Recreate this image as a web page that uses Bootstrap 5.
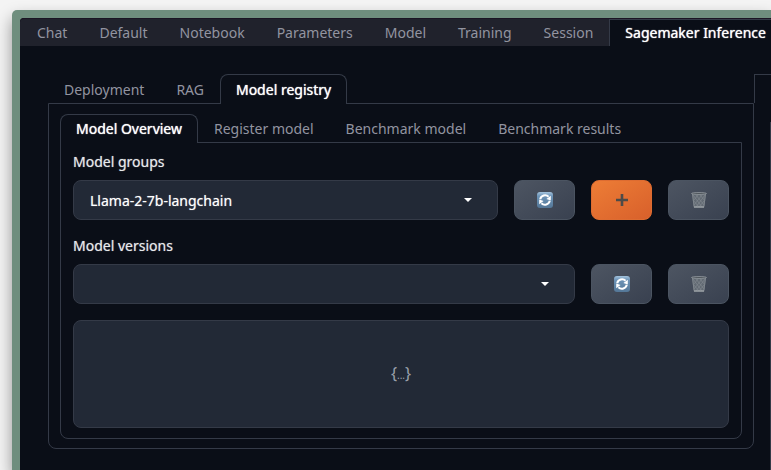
<!DOCTYPE html>
<html lang="en">
<head>
<meta charset="utf-8">
<meta name="viewport" content="width=device-width, initial-scale=1">
<title>Sagemaker Inference</title>
<link rel="stylesheet" href="https://cdn.jsdelivr.net/npm/bootstrap@5.3.0/dist/css/bootstrap.min.css">
<style>
:root { --line: #343a47; --ink: #0a0e17; --field: #222936; }
body { font: 14px/20px "Noto Sans", sans-serif; color: #e8e9ec; background: #f4f4f4; }
.desk { padding: 10px 0 0 12px; }
.frame { background: #6f8e7e; border-top-left-radius: 5px; padding: 8px 0 0 8px; box-shadow: 0 8px 16px rgba(0,0,0,.4); }
.app { background: var(--ink); border-top-left-radius: 4px; }
.tabset { border: 0; }
.tabset .nav-link { color: #9294a0; padding: 5px 15px 4px; border: 1px solid transparent; border-bottom: 0; border-radius: 8px 8px 0 0; margin: 0; line-height: 20px; white-space: nowrap; }
.tabset .nav-link.active { color: #fff; background: var(--ink); border-color: var(--line); text-shadow: 0 0 1px #fff; }
.outer-tabs, .inner-tabs { position: relative; z-index: 1; margin-bottom: -1px; }
.tabset.inner-tabs .nav-link { padding-top: 4px; }
.top-tabs { background: #20222c; border-top: 1px solid #1b1524; border-top-left-radius: 4px; padding-left: 1px; }
.tabset.top-tabs .nav-link { padding: 3px 15px; border-radius: 0; }
.workspace { padding: 28px 0 0 28px; }
.main-column { padding-bottom: 21px; }
.panel { border: 1px solid var(--line); border-radius: 0 0 8px 8px; }
.outer-panel { padding: 10px 11px 9px; }
.inner-panel { padding: 9px 12px 10px; }
.side { width: 17px; }
.side-tab { height: 29px; border: 1px solid var(--line); border-width: 1px 0 0 1px; }
.side-body { border-right: 1px solid var(--line); margin-top: 19px; }
.fields { display: flex; flex-direction: column; gap: 16px; }
.form-label { margin-bottom: 8px; text-shadow: 0 0 1px rgba(232,233,236,.6); }
.pick { height: 40px; font-size: 14px; color: #fff; text-shadow: 0 0 1px rgba(255,255,255,.6); background-color: var(--field); border: 1px solid var(--line); border-radius: 8px; padding: 8px 40px 8px 16px;
  background-image: url("data:image/svg+xml,%3Csvg xmlns='http://www.w3.org/2000/svg' viewBox='0 0 10 6'%3E%3Cpath fill='%23fff' d='M1 1h8L5 5z'/%3E%3C/svg%3E"); background-size: 10px 6px; background-position: right 24px center; }
.tool { width: 61px; height: 40px; padding: 0; border: 1px solid #4b5461; border-radius: 8px; background: linear-gradient(to bottom right, #4d5562, #394150); }
.tool.add { background: linear-gradient(to bottom right, #ed7d36, #d8602b); border-color: #dd6c31; }
.tool svg { display: block; margin: auto; }
.viewer { height: 108px; background: var(--field); border: 1px solid var(--line); border-radius: 8px; color: #9ba1ac; font-size: 16px; }
.viewer small { font-size: 10px; }
</style>
<script src="https://cdn.jsdelivr.net/npm/bootstrap@5.3.0/dist/js/bootstrap.bundle.min.js"></script>
</head>
<body class="overflow-hidden">
<svg class="position-absolute" width="0" height="0" aria-hidden="true">
  <linearGradient id="blue" x1="0" y1="0" x2="0" y2="1"><stop stop-color="#a3c3dd"/><stop offset=".25" stop-color="#6d94b7"/><stop offset="1" stop-color="#547797"/></linearGradient>
  <symbol id="sync" viewBox="0 0 18 18">
    <rect x="1" y="1" width="16" height="16" rx="3" fill="url(#blue)"/>
    <path d="M4.2 8.2a5 5 0 0 1 8.4-2.4M13.8 9.8a5 5 0 0 1-8.4 2.4" fill="none" stroke="#fff" stroke-width="2"/>
    <path d="M14.8 4.8v4.7l-4.4-1.6zM3.2 13.2V8.5l4.4 1.6z" fill="#fff"/>
  </symbol>
  <symbol id="bin" viewBox="0 0 18 18">
    <path d="M2 2.5h14L14.2 16.5H3.8z" fill="#626a73"/>
    <path d="M3 4l9 12M6 4l8 10M10 4l5 6M3 9l6 7M15 4L6 16M12 4L4 14M8 4l-4 5M14 10l-5 6" stroke="#858b92" stroke-width=".6" fill="none"/>
    <path d="M2.5 3l1.6 12.5M15.5 3l-1.6 12.5" stroke="#7f868d" fill="none"/>
    <path d="M4 16h10" stroke="#a0a5aa" stroke-width="1.4"/>
    <ellipse cx="9" cy="2.5" rx="7.5" ry="1" fill="#50575d" stroke="#91979d" stroke-width=".8"/>
  </symbol>
</svg>
<div class="desk">
 <div class="frame">
  <main class="app">
   <nav class="nav nav-tabs tabset top-tabs flex-nowrap" aria-label="Main">
    <button type="button" class="nav-link">Chat</button>
    <button type="button" class="nav-link">Default</button>
    <button type="button" class="nav-link">Notebook</button>
    <button type="button" class="nav-link">Parameters</button>
    <button type="button" class="nav-link">Model</button>
    <button type="button" class="nav-link">Training</button>
    <button type="button" class="nav-link">Session</button>
    <button type="button" class="nav-link active flex-grow-1 text-start">Sagemaker Inference</button>
   </nav>
   <div class="workspace d-flex">
    <section class="main-column flex-grow-1">
     <nav class="nav nav-tabs tabset outer-tabs" aria-label="Sagemaker">
      <button type="button" class="nav-link">Deployment</button>
      <button type="button" class="nav-link">RAG</button>
      <button type="button" class="nav-link active">Model registry</button>
     </nav>
     <div class="panel outer-panel">
      <nav class="nav nav-tabs tabset inner-tabs" aria-label="Model registry">
       <button type="button" class="nav-link active">Model Overview</button>
       <button type="button" class="nav-link">Register model</button>
       <button type="button" class="nav-link">Benchmark model</button>
       <button type="button" class="nav-link">Benchmark results</button>
      </nav>
      <div class="panel inner-panel fields">
       <div class="d-flex align-items-end gap-3">
        <div class="flex-grow-1">
         <label class="form-label d-block" for="groups">Model groups</label>
         <select class="form-select pick" id="groups"><option>Llama-2-7b-langchain</option></select>
        </div>
        <button type="button" class="btn tool" aria-label="Refresh groups"><svg width="18" height="18"><use href="#sync"/></svg></button>
        <button type="button" class="btn tool add" aria-label="Add group"><svg width="14" height="14" viewBox="0 0 14 14"><path d="M7 1v12M1 7h12" stroke="#4c4b49" stroke-width="2.6"/></svg></button>
        <button type="button" class="btn tool" aria-label="Delete group"><svg width="18" height="18"><use href="#bin"/></svg></button>
       </div>
       <div class="d-flex align-items-end gap-3">
        <div class="flex-grow-1">
         <label class="form-label d-block" for="versions">Model versions</label>
         <select class="form-select pick" id="versions"><option></option></select>
        </div>
        <button type="button" class="btn tool" aria-label="Refresh versions"><svg width="18" height="18"><use href="#sync"/></svg></button>
        <button type="button" class="btn tool" aria-label="Delete version"><svg width="18" height="18"><use href="#bin"/></svg></button>
       </div>
       <div class="viewer d-flex align-items-center justify-content-center"><span>{<small>...</small>}</span></div>
      </div>
     </div>
    </section>
    <aside class="side d-flex flex-column flex-shrink-0">
     <div class="side-tab"></div>
     <div class="side-body flex-grow-1"></div>
    </aside>
   </div>
  </main>
 </div>
</div>
</body>
</html>
